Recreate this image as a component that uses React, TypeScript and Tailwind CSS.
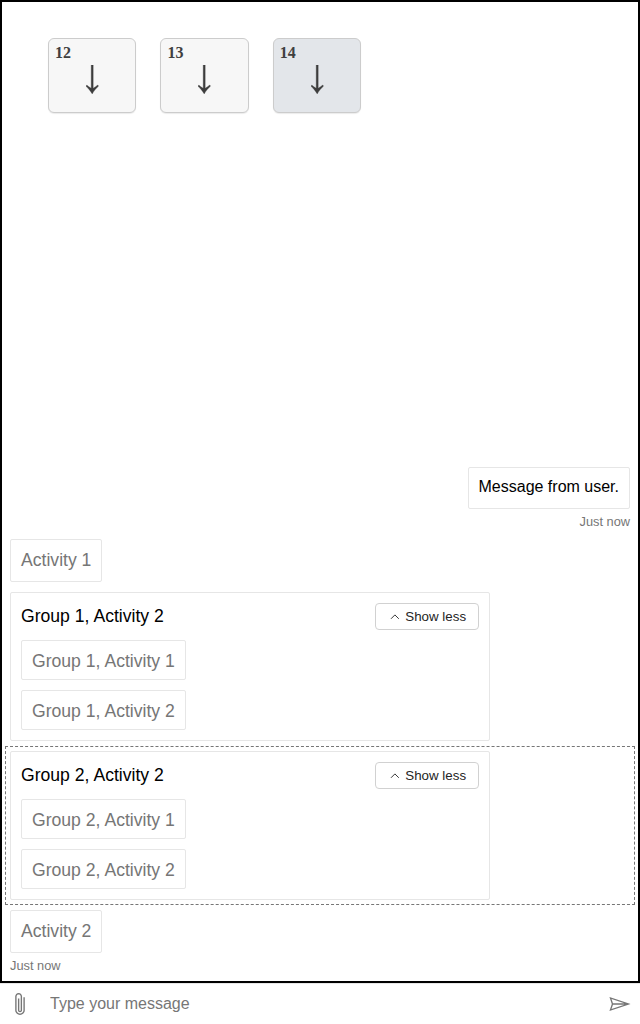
import React from 'react';

function Key({ label, active = false }: { label: string; active?: boolean }) {
  return (
    <div
      className={`relative h-[75px] w-[88.4px] rounded-[6px] border border-[#cccccc] shadow-[0_1px_1px_rgba(0,0,0,0.08)] ${
        active ? 'bg-[#e3e6ea]' : 'bg-[#f7f7f7]'
      }`}
    >
      <span className="block pt-[5px] pl-[6px] font-['Liberation_Serif',serif] text-[16px] leading-[18px] font-bold text-[#404040]">
        {label}
      </span>
      <svg className="absolute top-[26px] left-[36.8px]" width="13" height="30" viewBox="0.3 0 13 30">
        <path
          d="M5.500 0h2v23.200c1.500-.7 3.100-1.900 4.300-3.200l1.100 1.100c-2.300 2.100-4.500 4.600-6.400 7.800C4.600 25.700 2.400 23.200.1 21.100l1.100-1.100c1.200 1.300 2.800 2.500 4.300 3.200z"
          fill="#3d3d3d"
          stroke="#3d3d3d"
          strokeWidth="0.300"
        />
      </svg>
    </div>
  );
}

function Bubble({ children, className = '' }: { children: React.ReactNode; className?: string }) {
  return (
    <div className={`flex w-fit items-center rounded-[2px] border border-[#e6e6e6] bg-white px-[10px] ${className}`}>
      {children}
    </div>
  );
}

function Group({ n }: { n: number }) {
  return (
    <section className="h-[149px] w-[480px] rounded-[2px] border border-[#e6e6e6] p-[10px]">
      <header className="flex h-[27px] items-center justify-between">
        <h2 className="pb-[2px] text-[17.6px] leading-5 text-black">Group {n}, Activity 2</h2>
        <button className="flex h-[27px] w-[104px] items-center rounded-[4px] border border-[#d1d1d1] bg-white pl-[14px] text-[13.333px] text-[#242424]">
          <svg width="10" height="8" viewBox="0 0 10 8" fill="none" className="mr-[5.3px]">
            <path d="M1 5.800 4.900 1.900 8.800 5.800" stroke="#242424" strokeWidth="0.900" />
          </svg>
          Show less
        </button>
      </header>
      <div className="mt-[10px] flex flex-col gap-[10px] text-[17.6px] leading-5 text-[#767676]">
        <Bubble className="h-10 pt-[2px]">Group {n}, Activity 1</Bubble>
        <Bubble className="h-10 pt-[2px]">Group {n}, Activity 2</Bubble>
      </div>
    </section>
  );
}

export default function App() {
  return (
    <div className="flex h-[1024px] w-[640px] flex-col bg-white font-['Liberation_Sans',Arial,sans-serif]">
      <main className="flex h-[983px] flex-col border-2 border-black">
        <div className="flex gap-[24px] pt-[36px] pl-[46px]">
          <Key label="12" />
          <Key label="13" />
          <Key label="14" active />
        </div>
        <div className="mt-auto flex flex-col items-end pr-2">
          <Bubble className="h-[42px] pb-[3px] text-[16px] text-black">Message from user.</Bubble>
          <span className="mt-[5px] text-[12.8px] leading-4 text-[#767676]">Just now</span>
        </div>
        <div className="mt-[9px] pl-2">
          <Bubble className="h-[43px] text-[17.6px] text-[#767676]">Activity 1</Bubble>
        </div>
        <div className="mt-[10px] pl-2">
          <Group n={1} />
        </div>
        <div className="mx-[3px] mt-[5px] border border-dashed border-[#767676] p-[4px]">
          <Group n={2} />
        </div>
        <div className="mt-[5px] mb-[7px] pl-2">
          <Bubble className="h-[43px] text-[17.6px] text-[#767676]">Activity 2</Bubble>
          <span className="mt-[5px] block text-[12.8px] leading-4 text-[#767676]">Just now</span>
        </div>
      </main>
      <footer className="flex h-[41px] items-center border-t border-[#e6e6e6]">
        <button className="flex w-10 items-center justify-center" aria-label="Attach">
          <svg height="28" width="16" viewBox="0 0 25.75 46" fill="#767676">
            <path d="M20.75 11.75v21.37a7.69 7.69 0 0 1-.62 3.07 7.95 7.95 0 0 1-4.19 4.19 7.89 7.89 0 0 1-6.13 0 7.95 7.95 0 0 1-4.19-4.19 7.69 7.69 0 0 1-.62-3.07v-22.5a5.27 5.27 0 0 1 .45-2.17 5.69 5.69 0 0 1 3-3 5.48 5.48 0 0 1 4.35 0 5.69 5.69 0 0 1 3 3 5.27 5.27 0 0 1 .45 2.17v22.5a3.41 3.41 0 0 1-.26 1.32 3.31 3.31 0 0 1-1.8 1.8 3.46 3.46 0 0 1-2.63 0 3.31 3.31 0 0 1-1.8-1.8 3.41 3.41 0 0 1-.26-1.32V14h2.25v19.12a1.13 1.13 0 1 0 2.25 0v-22.5a3.41 3.41 0 0 0-.26-1.32 3.31 3.31 0 0 0-1.8-1.8 3.46 3.46 0 0 0-2.63 0 3.31 3.31 0 0 0-1.8 1.8 3.41 3.41 0 0 0-.26 1.32v22.5a5.32 5.32 0 0 0 .45 2.18 5.69 5.69 0 0 0 3 3 5.48 5.48 0 0 0 4.35 0 5.69 5.69 0 0 0 3-3 5.32 5.32 0 0 0 .45-2.18V11.75z" />
          </svg>
        </button>
        <input
          className="min-w-0 flex-1 px-[10px] text-[16px] text-black outline-none placeholder:text-[#767676]"
          placeholder="Type your message"
        />
        <button className="flex w-10 items-center justify-center pr-px" aria-label="Send">
          <svg height="20" width="28" viewBox="0 0 45.7 33.8" fill="#767676">
            <path clipRule="evenodd" fillRule="evenodd" d="M8.55 25.25l21.67-7.25H11zm2.41-9.47h19.26l-21.67-7.23zm-6 13l4-11.9L5 5l35.7 11.9z" />
          </svg>
        </button>
      </footer>
    </div>
  );
}
